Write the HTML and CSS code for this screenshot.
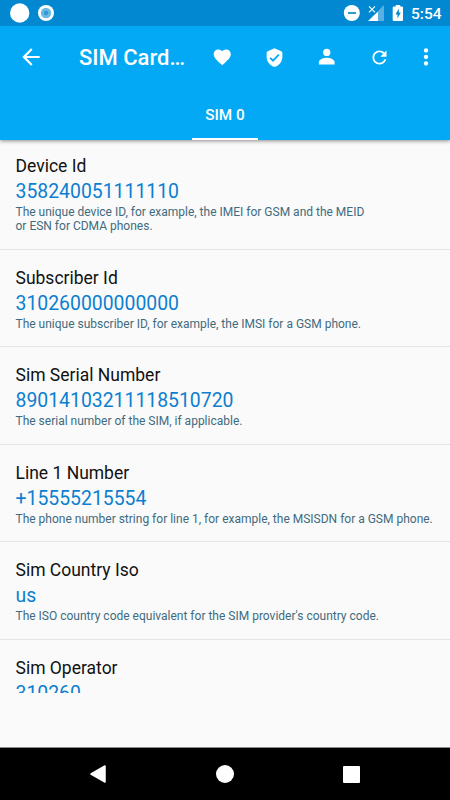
FILE: index.html
```html
<!DOCTYPE html>
<html lang="en">
<head>
  <meta charset="UTF-8">
  <meta name="viewport" content="width=device-width, initial-scale=1.0">
  <title>SIM Card</title>
  <link rel="stylesheet" href="styles.css">
</head>
<body>
  <header>
    <div class="status">
      <svg width="58" height="26" viewBox="0 0 58 26">
        <circle cx="19.7" cy="13" r="9.7" fill="#fff"/>
        <circle cx="46" cy="13" r="8" fill="#fff"/>
        <circle cx="46" cy="13" r="5.2" fill="#68b9e5"/>
        <circle cx="46" cy="13" r="2.2" fill="#3498d3"/>
      </svg>
      <svg class="status-right" width="70" height="26" viewBox="340 0 70 26">
        <circle cx="351.8" cy="13" r="8" fill="#fff"/>
        <path d="M348 13h8" stroke="#0288d1" stroke-width="1.7"/>
        <path d="M384 5v16h-16z" fill="#fff" opacity=".35"/>
        <path d="M368 5h8l2 1v6l-4 3h-5z" fill="#0288d1"/>
        <path d="M378 11.5V21h-9.8z" fill="#fff"/>
        <path d="M369 6.3l6 6m0-6l-6 6" stroke="#fff" stroke-width="1.1"/>
        <path d="M394 6.5h1.8V5h4.400v1.500h1.800q1 0 1 1V20q0 1-1 1h-8.300q-1 0-1-1V7.500q0-1 1-1z" fill="#fff"/>
        <path d="M398.800 8.500l-3.300 6h2v4l3.300-6h-2z" fill="#0288d1"/>
      </svg>
      <span class="time">5:54</span>
    </div>
    <div class="toolbar">
      <svg class="back" width="26" height="26" viewBox="0 0 24 24"><path d="M20 11H7.830l5.590-5.590L12 4l-8 8 8 8 1.410-1.410L7.830 13H20v-2z"/></svg>
      <h1>SIM Card…</h1>
      <div class="actions">
        <svg width="20.500" height="20.500" viewBox="0 0 24 24"><path d="M12 21.350l-1.450-1.320C5.400 15.360 2 12.280 2 8.500 2 5.420 4.420 3 7.500 3c1.740 0 3.410.810 4.500 2.090C13.090 3.810 14.760 3 16.500 3 19.580 3 22 5.420 22 8.500c0 3.780-3.400 6.860-8.550 11.540L12 21.350z"/></svg>
        <svg width="21" height="21" viewBox="0 0 24 24"><path d="M12 1.500L4.200 4.800Q3 5.400 3 6.600V11c0 5.500 3.800 10.500 9 11.700 5.200-1.200 9-6.200 9-11.700V6.600q0-1.200-1.200-1.800z"/><path class="tick" d="M7 12.300l3.300 3.300 6.700-6.800"/></svg>
        <svg width="23.500" height="23.500" viewBox="0 0 24 24"><circle cx="12" cy="7.600" r="3.700"/><path d="M12 13c-2.700 0-8 1.340-8 4.500V20h16v-2.500C20 14.340 14.700 13 12 13z"/></svg>
        <svg width="21" height="21" viewBox="0 0 24 24"><path d="M17.650 6.350C16.200 4.900 14.210 4 12 4c-4.420 0-7.990 3.580-7.990 8s3.570 8 7.990 8c3.730 0 6.840-2.550 7.730-6h-2.080c-.820 2.330-3.040 4-5.650 4-3.310 0-6-2.690-6-6s2.690-6 6-6c1.660 0 3.140.690 4.220 1.780L13 11h7V4l-2.350 2.350z"/></svg>
        <svg class="more" width="26" height="26" viewBox="0 0 24 24"><circle cx="12" cy="6" r="2"/><circle cx="12" cy="12" r="2"/><circle cx="12" cy="18" r="2"/></svg>
      </div>
    </div>
    <div class="tabs">
      <div class="tab">SIM 0</div>
    </div>
  </header>
  <main>
    <section>
      <h2>Device Id</h2>
      <p class="value">358240051111110</p>
      <p class="info">The unique device ID, for example, the IMEI for GSM and the MEID<br>or ESN for CDMA phones.</p>
    </section>
    <section>
      <h2>Subscriber Id</h2>
      <p class="value">310260000000000</p>
      <p class="info">The unique subscriber ID, for example, the IMSI for a GSM phone.</p>
    </section>
    <section>
      <h2>Sim Serial Number</h2>
      <p class="value">89014103211118510720</p>
      <p class="info">The serial number of the SIM, if applicable.</p>
    </section>
    <section>
      <h2>Line 1 Number</h2>
      <p class="value">+15555215554</p>
      <p class="info">The phone number string for line 1, for example, the MSISDN for a GSM phone.</p>
    </section>
    <section>
      <h2>Sim Country Iso</h2>
      <p class="value">us</p>
      <p class="info">The ISO country code equivalent for the SIM provider's country code.</p>
    </section>
    <section>
      <h2>Sim Operator</h2>
      <p class="value">310260</p>
    </section>
  </main>
  <nav>
    <svg width="18" height="20" viewBox="0 0 18 20"><path d="M16 2v16L2 10z" stroke="#fff" stroke-width="1.500" stroke-linejoin="round"/></svg>
    <svg width="18" height="18" viewBox="0 0 18 18"><circle cx="9" cy="9" r="9"/></svg>
    <svg width="17" height="17" viewBox="0 0 17 17"><rect width="17" height="17" rx="1"/></svg>
  </nav>
</body>
</html>
```

FILE: styles.css
```css
html,body{
  margin: 0;
  height: 100%;
}
body{
  display: flex;
  flex-direction: column;
  overflow: hidden;
  background-color: #fafafa;
  font-family: Roboto, sans-serif;
}
h1,h2,p{
  margin: 0;
  font-weight: 400;
}
svg{
  display: block;
  flex: none;
  fill: #fff;
}
header{
  flex: none;
  height: 140px;
  background-color: #03a9f4;
  color: #fff;
  box-shadow: 0 1px 4px rgba(0, 0, 0, .45);
}
.status{
  display: flex;
  height: 26px;
  background-color: #0288d1;
}
.status-right{
  margin-left: auto;
}
.time{
  width: 40px;
  padding-left: 1px;
  box-sizing: border-box;
  font-size: 15.5px;
  font-weight: 500;
  line-height: 28px;
}
.toolbar{
  display: flex;
  align-items: center;
  height: 62px;
}
.back{
  margin-left: 17.5px;
}
h1{
  width: 125.5px;
  margin-left: 35.5px;
  font-size: 22px;
  font-weight: 500;
  line-height: 62px;
  white-space: nowrap;
  padding-top: 2px;
}
.actions{
  display: grid;
  grid-template-columns: 35px 70px 35px 70px 22px;
  justify-items: center;
  align-items: center;
}
.tick{
  fill: none;
  stroke: #03a9f4;
  stroke-width: 2;
}
.tabs{
  display: flex;
  justify-content: center;
  height: 52px;
}
.tab{
  width: 66px;
  box-sizing: border-box;
  border-bottom: 2px solid #fff;
  font-size: 15.3px;
  font-weight: 500;
  line-height: 54px;
  text-align: center;
}
main{
  height: 553px;
  overflow: hidden;
}
section{
  height: 97.5px;
  padding: 17px 15.5px 0;
  box-sizing: border-box;
  border-bottom: 1px solid #e4e4e4;
}
section:first-child{
  height: 109.6px;
  padding-top: 15px;
}
h2{
  color: #111;
  font-size: 17.5px;
  line-height: 23px;
}
.value{
  color: #0c7fd0;
  font-size: 19.4px;
  line-height: 27px;
}
.info{
  color: #3f6b7e;
  font-size: 12px;
  line-height: 14px;
  white-space: nowrap;
}
nav{
  display: flex;
  justify-content: space-between;
  align-items: center;
  height: 53px;
  margin-top: auto;
  padding: 0 90px 0 89px;
  background-color: #000;
  border-top: 1px solid #888;
  box-sizing: border-box;
}
```
